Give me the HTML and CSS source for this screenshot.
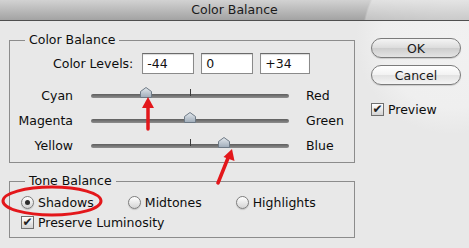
FILE: index.html
```html
<!DOCTYPE html>
<html>
<head>
	<meta charset="utf-8" />
	<title>Color Balance</title>
	<link rel="stylesheet" href="styles.css">
</head>
<body>
	<div class="titlebar">Color Balance</div>

	<div class="dialog">
		<div class="main">
			<fieldset class="group">
				<legend>Color Balance</legend>
				<div class="levels">
					<span class="levels-label">Color Levels:</span>
					<input class="level wide" type="text" value="-44">
					<input class="level wide" type="text" value="0">
					<input class="level" type="text" value="+34">
				</div>

				<div class="sliders">
					<div class="slider-row">
						<span class="left-label">Cyan</span>
						<div class="track">
							<span class="tick"></span>
							<svg class="thumb" style="left: 28%" width="12" height="11" viewBox="0 0 12 11"><use href="#thumb"/></svg>
						</div>
						<span class="right-label">Red</span>
					</div>
					<div class="slider-row">
						<span class="left-label">Magenta</span>
						<div class="track">
							<span class="tick"></span>
							<svg class="thumb" style="left: 50%" width="12" height="11" viewBox="0 0 12 11"><use href="#thumb"/></svg>
						</div>
						<span class="right-label">Green</span>
					</div>
					<div class="slider-row">
						<span class="left-label">Yellow</span>
						<div class="track">
							<span class="tick"></span>
							<svg class="thumb" style="left: 67%" width="12" height="11" viewBox="0 0 12 11"><use href="#thumb"/></svg>
						</div>
						<span class="right-label">Blue</span>
					</div>
				</div>
			</fieldset>

			<fieldset class="group tone">
				<legend>Tone Balance</legend>
				<div class="radios">
					<label class="choice"><span class="radio on"></span>Shadows</label>
					<label class="choice"><span class="radio"></span>Midtones</label>
					<label class="choice"><span class="radio"></span>Highlights</label>
				</div>
				<label class="choice"><span class="check">&#10004;</span>Preserve Luminosity</label>
			</fieldset>
		</div>

		<div class="side">
			<button class="btn default">OK</button>
			<button class="btn">Cancel</button>
			<label class="choice preview"><span class="check">&#10004;</span>Preview</label>
		</div>
	</div>

	<!-- red annotations drawn over the dialog -->
	<svg class="marks" width="469" height="248" viewBox="0 0 469 248">
		<defs>
			<linearGradient id="thumbfill" x1="0" y1="0" x2="0" y2="1">
				<stop offset="0" stop-color="#e4e9ee"/>
				<stop offset="1" stop-color="#9eabb8"/>
			</linearGradient>
			<symbol id="thumb" viewBox="0 0 12 11">
				<path d="M0.5 4.5 L6 0.5 L11.5 4.5 L11.5 10.5 L0.5 10.5 Z" fill="url(#thumbfill)" stroke="#6e7a86"/>
			</symbol>
		</defs>
		<line x1="148" y1="129" x2="148" y2="106" stroke="#e3171b" stroke-width="3.5" stroke-linecap="round"/>
		<path d="M148 97 L154 108 L142 108 Z" fill="#e3171b"/>
		<line x1="218" y1="183" x2="228" y2="158" stroke="#e3171b" stroke-width="3.5" stroke-linecap="round"/>
		<path d="M232 149 L234.5 161 L223.5 157 Z" fill="#e3171b"/>
		<ellipse cx="52" cy="201" rx="49" ry="14" fill="none" stroke="#e3171b" stroke-width="3"/>
	</svg>
</body>
</html>
```

FILE: styles.css
```css
* {
	margin: 0;
	padding: 0;
	box-sizing: border-box;
}

body {
	position: relative;
	width: 469px;
	height: 248px;
	overflow: hidden;
	font-family: "DejaVu Sans", sans-serif;
	font-size: 12.5px;
	color: #0d0d0d;
	background:
		radial-gradient(circle at 452px 38px, #f1f1f1 0, #efefef 70px, #e8e8e8 96px);
}

.titlebar {
	height: 21px;
	line-height: 20px;
	text-align: center;
	color: #1a1a1a;
	border-bottom: 1px solid #4f4f4f;
	background:
		radial-gradient(circle at 452px 38px, rgba(255,255,255,0.45) 0, rgba(255,255,255,0.35) 88px, rgba(255,255,255,0) 90px),
		linear-gradient(to bottom, #d2d2d2, #a3a3a3);
}

.dialog {
	display: flex;
	padding: 12px 0 0 9px;
}

.main {
	width: 346px;
}

/* Group boxes */

.group {
	border: 1px solid #8c8c8c;
	padding: 0 0 4px 0;
}

.group legend {
	margin-left: 15px;
	padding: 0 4px;
	line-height: 14px;
}

.levels {
	display: flex;
	align-items: center;
	margin-top: 6px;
	padding-left: 43px;
}

.levels-label {
	margin-right: 9px;
}

.level {
	width: 50px;
	height: 21px;
	margin-right: 9px;
	padding-left: 4px;
	font: inherit;
	color: #111;
	background: #fff;
	border: 1px solid #8a8a8a;
	border-top-color: #6a6a6a;
	box-shadow: inset 0 1px 1px rgba(0,0,0,0.15);
}

.level.wide {
	width: 52px;
	margin-right: 7px;
}

/* Sliders */

.sliders {
	margin-top: 9px;
}

.slider-row {
	display: flex;
	align-items: center;
	height: 25px;
}

.left-label {
	width: 63px;
	text-align: right;
}

.right-label {
	margin-left: 17px;
}

.track {
	position: relative;
	width: 198px;
	height: 4px;
	margin-left: 18px;
	border-radius: 2px;
	background: linear-gradient(to bottom, #5e5e5e, #8e8e8e);
}

.tick {
	position: absolute;
	left: 99px;
	top: -5px;
	width: 1px;
	height: 7px;
	background: #3a3a3a;
}

.thumb {
	position: absolute;
	top: -7px;
	margin-left: -6px;
}

/* Tone balance */

.tone {
	margin-top: 11px;
	padding-bottom: 5px;
}

.radios {
	display: flex;
	gap: 34px;
	margin-top: 4px;
	height: 20px;
	align-items: center;
}

.choice {
	display: flex;
	align-items: center;
	height: 20px;
	padding-left: 11px;
}

.radios .choice + .choice {
	padding-left: 0;
}

.radio {
	width: 13px;
	height: 13px;
	margin-right: 4px;
	border-radius: 50%;
	border: 1px solid #7d7d7d;
	background: linear-gradient(to bottom, #ffffff, #d4d4d4);
	box-shadow: 0 1px 1px rgba(0,0,0,0.15);
	display: flex;
	align-items: center;
	justify-content: center;
}

.radio.on::after {
	content: '';
	width: 5px;
	height: 5px;
	border-radius: 50%;
	background: #2d2d2d;
}

.check {
	width: 13px;
	height: 13px;
	margin-right: 4px;
	border: 1px solid #6f6f6f;
	background: linear-gradient(to bottom, #ffffff, #d2d2d2);
	font-size: 12px;
	line-height: 11px;
	text-align: center;
	color: #222;
}

/* Buttons column */

.side {
	display: flex;
	flex-direction: column;
	width: 90px;
	margin-left: 16px;
	padding-top: 5px;
}

.btn {
	height: 20px;
	margin-bottom: 7px;
	font: inherit;
	color: #1a1a1a;
	border: 1px solid #7b7b7b;
	border-radius: 10px;
	background: linear-gradient(to bottom, #ffffff, #f2f2f2 50%, #e2e2e2 51%, #f4f4f4);
	box-shadow: 0 1px 1px rgba(0,0,0,0.15);
}

.btn.default {
	background: linear-gradient(to bottom, #f4f4f4, #dcdcdc 50%, #cdcdcd 51%, #e4e4e4);
}

.preview {
	padding-left: 0;
	margin-top: 7px;
}

.marks {
	position: absolute;
	left: 0;
	top: 0;
}
```
